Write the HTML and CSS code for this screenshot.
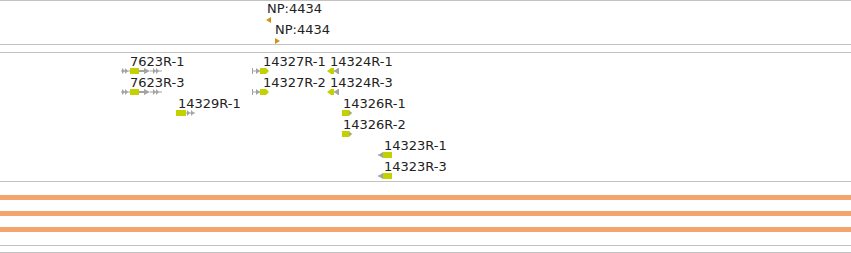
FILE: index.html
```html
<!DOCTYPE html>
<html>
<head>
<meta charset="utf-8">
<link rel="stylesheet" href="styles.css">
</head>
<body>
<div class="browser">
  <div class="track track-np">
    <span class="label" style="left:267px;top:1px">NP:4434</span>
    <svg class="glyph" style="left:266px;top:16px" width="6" height="6" viewBox="0 0 6 6"><polygon points="0,3 5,0 5,6" class="gold"/></svg>
    <span class="label" style="left:275px;top:22px">NP:4434</span>
    <svg class="glyph" style="left:275px;top:37px" width="6" height="6" viewBox="0 0 6 6"><polygon points="0,0 5,3 0,6" class="gold"/></svg>
  </div>
  <div class="track track-gap"></div>
  <div class="track track-features">
    <span class="label" style="left:130px;top:2px">7623R-1</span>
    <svg class="glyph" style="left:121px;top:15px" width="42" height="6" viewBox="0 0 42 6">
      <rect x="0" y="2.5" width="9" height="1" class="grey"/><polygon points="1,0 4,3 1,6" class="grey"/><polygon points="4,0 7,3 4,6" class="grey"/>
      <rect x="9" y="0" width="9" height="6" class="lime"/>
      <rect x="18" y="2" width="8" height="2" class="grey"/><polygon points="23,0 29,3 23,6" class="grey"/>
      <rect x="29" y="2.5" width="12" height="1" class="grey"/><polygon points="32,0 35,3 32,6" class="grey"/><polygon points="35,0 38,3 35,6" class="grey"/>
    </svg>
    <span class="label" style="left:130px;top:23px">7623R-3</span>
    <svg class="glyph" style="left:121px;top:36px" width="42" height="6" viewBox="0 0 42 6">
      <rect x="0" y="2.5" width="9" height="1" class="grey"/><polygon points="1,0 4,3 1,6" class="grey"/><polygon points="4,0 7,3 4,6" class="grey"/>
      <rect x="9" y="0" width="9" height="6" class="lime"/>
      <rect x="18" y="2" width="8" height="2" class="grey"/><polygon points="23,0 29,3 23,6" class="grey"/>
      <rect x="29" y="2.5" width="12" height="1" class="grey"/><polygon points="32,0 35,3 32,6" class="grey"/><polygon points="35,0 38,3 35,6" class="grey"/>
    </svg>
    <span class="label" style="left:178px;top:44px">14329R-1</span>
    <svg class="glyph" style="left:176px;top:57px" width="20" height="6" viewBox="0 0 20 6">
      <rect x="0" y="0" width="10" height="6" class="lime"/>
      <rect x="10" y="2.5" width="9" height="1" class="grey"/><polygon points="11,0 14,3 11,6" class="grey"/><polygon points="15,0 18,3 15,6" class="grey"/>
    </svg>

    <span class="label" style="left:263px;top:2px">14327R-1</span>
    <svg class="glyph" style="left:252px;top:15px" width="18" height="6" viewBox="0 0 18 6">
      <rect x="0" y="2.5" width="8" height="1" class="grey"/><rect x="0" y="0" width="1" height="6" class="grey"/><polygon points="4,0 8,3 4,6" class="grey"/>
      <polygon points="8,0 14,0 17,3 14,6 8,6" class="lime"/>
    </svg>
    <span class="label" style="left:263px;top:23px">14327R-2</span>
    <svg class="glyph" style="left:252px;top:36px" width="18" height="6" viewBox="0 0 18 6">
      <rect x="0" y="2.5" width="8" height="1" class="grey"/><rect x="0" y="0" width="1" height="6" class="grey"/><polygon points="4,0 8,3 4,6" class="grey"/>
      <polygon points="8,0 14,0 17,3 14,6 8,6" class="lime"/>
    </svg>

    <span class="label" style="left:330px;top:2px">14324R-1</span>
    <svg class="glyph" style="left:327px;top:15px" width="13" height="6" viewBox="0 0 13 6">
      <polygon points="0,3 4,0 7,0 7,6 4,6" class="lime"/>
      <rect x="7" y="2.5" width="5" height="1" class="grey"/><polygon points="11,0 7,3 11,6" class="grey"/><rect x="11" y="0" width="1" height="6" class="grey"/>
    </svg>
    <span class="label" style="left:330px;top:23px">14324R-3</span>
    <svg class="glyph" style="left:327px;top:36px" width="13" height="6" viewBox="0 0 13 6">
      <polygon points="0,3 4,0 7,0 7,6 4,6" class="lime"/>
      <rect x="7" y="2.5" width="5" height="1" class="grey"/><polygon points="11,0 7,3 11,6" class="grey"/><rect x="11" y="0" width="1" height="6" class="grey"/>
    </svg>

    <span class="label" style="left:343px;top:44px">14326R-1</span>
    <svg class="glyph" style="left:342px;top:57px" width="11" height="6" viewBox="0 0 11 6">
      <polygon points="0,0 7,0 10,3 7,6 0,6" class="lime"/><polygon points="7,1 10,3 7,5" class="grey"/>
    </svg>
    <span class="label" style="left:343px;top:65px">14326R-2</span>
    <svg class="glyph" style="left:342px;top:78px" width="11" height="6" viewBox="0 0 11 6">
      <polygon points="0,0 7,0 10,3 7,6 0,6" class="lime"/><polygon points="7,1 10,3 7,5" class="grey"/>
    </svg>

    <span class="label" style="left:384px;top:86px">14323R-1</span>
    <svg class="glyph" style="left:377px;top:99px" width="16" height="6" viewBox="0 0 16 6">
      <rect x="1" y="2.5" width="6" height="1" class="grey"/><polygon points="1,3 6,0 6,6" class="grey"/>
      <rect x="6" y="0" width="9" height="6" class="lime"/>
    </svg>
    <span class="label" style="left:384px;top:107px">14323R-3</span>
    <svg class="glyph" style="left:377px;top:120px" width="16" height="6" viewBox="0 0 16 6">
      <rect x="1" y="2.5" width="6" height="1" class="grey"/><polygon points="1,3 6,0 6,6" class="grey"/>
      <rect x="6" y="0" width="9" height="6" class="lime"/>
    </svg>
  </div>
  <div class="track track-bands">
    <div class="band"></div>
    <div class="band"></div>
    <div class="band"></div>
  </div>
  <div class="track track-bottom"></div>
  <div class="track track-end"></div>
</div>
</body>
</html>
```
FILE: styles.css
```css
html, body {
  margin: 0;
  padding: 0;
  background: #ffffff;
}
body {
  font-family: "DejaVu Sans", Verdana, sans-serif;
  font-size: 13px;
  color: #222222;
  width: 851px;
  height: 253px;
  overflow: hidden;
}
.browser {
  display: flex;
  flex-direction: column;
}
.track {
  position: relative;
  border-top: 1px solid #c2c2c2;
  box-sizing: border-box;
}
.track-np { height: 44px; }
.track-gap { height: 8px; }
.track-features { height: 129px; }
.track-bands {
  height: 64px;
  display: flex;
  flex-direction: column;
  gap: 11px;
  padding-top: 13px;
}
.band {
  height: 5px;
  background: #f4a46f;
}
.track-bottom { height: 7px; }
.track-end { height: 1px; }
.label {
  position: absolute;
  margin-top: -1px;
  line-height: 15px;
  white-space: nowrap;
}
.glyph {
  position: absolute;
  display: block;
}
.gold { fill: #d09412; }
.lime { fill: #c3d100; }
.grey { fill: #a3a3a3; }
```
